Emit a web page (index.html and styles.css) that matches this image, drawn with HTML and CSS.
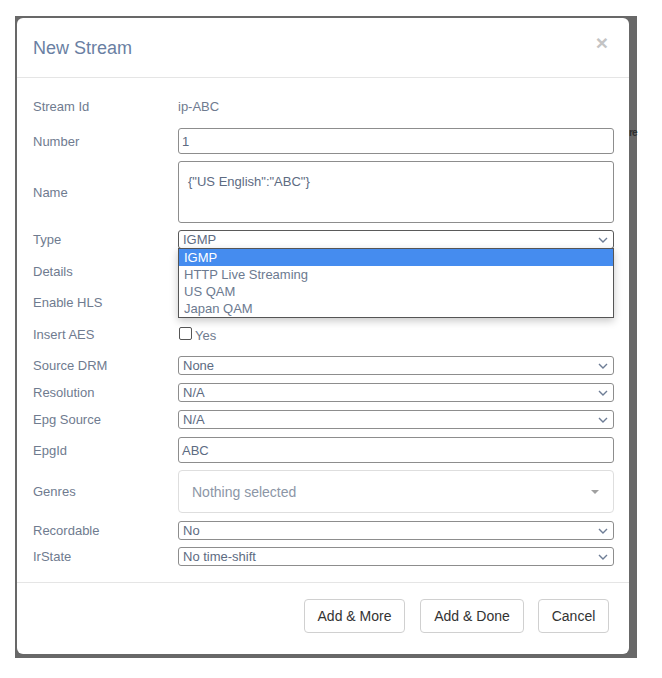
FILE: index.html
```html
<!DOCTYPE html>
<html>
<head>
<meta charset="utf-8">
<link rel="stylesheet" href="styles.css">
</head>
<body>
<div class="backdrop">
  <span class="behind-text">re</span>
  <div class="modal">
    <div class="modal-header">
      <h4 class="modal-title">New Stream</h4>
      <span class="close">&times;</span>
    </div>
    <div class="modal-body">
      <div class="row r-static">
        <div class="label">Stream Id</div>
        <div class="value">ip-ABC</div>
      </div>
      <div class="row r-input gap12">
        <div class="label">Number</div>
        <div class="input">1</div>
      </div>
      <div class="row r-textarea gap7">
        <div class="label">Name</div>
        <div class="textarea">{"US English":"ABC"}</div>
      </div>
      <div class="row r-select gap7 has-menu">
        <div class="label">Type</div>
        <div class="select focused">IGMP<svg class="chev" viewBox="0 0 10 6" width="10" height="6"><path d="M1 1 L5 5 L9 1" fill="none" stroke="currentColor" stroke-width="1.4"/></svg></div>
        <div class="listbox">
          <div class="opt active">IGMP</div>
          <div class="opt">HTTP Live Streaming</div>
          <div class="opt">US QAM</div>
          <div class="opt">Japan QAM</div>
        </div>
      </div>
      <div class="row r-select gap13">
        <div class="label">Details</div>
      </div>
      <div class="row r-select gap12">
        <div class="label">Enable HLS</div>
      </div>
      <div class="row r-select gap13">
        <div class="label">Insert AES</div>
        <div class="check"><span class="box"></span><span class="yes">Yes</span></div>
      </div>
      <div class="row r-select gap12">
        <div class="label">Source DRM</div>
        <div class="select">None<svg class="chev" viewBox="0 0 10 6" width="10" height="6"><path d="M1 1 L5 5 L9 1" fill="none" stroke="currentColor" stroke-width="1.4"/></svg></div>
      </div>
      <div class="row r-select gap8">
        <div class="label">Resolution</div>
        <div class="select">N/A<svg class="chev" viewBox="0 0 10 6" width="10" height="6"><path d="M1 1 L5 5 L9 1" fill="none" stroke="currentColor" stroke-width="1.4"/></svg></div>
      </div>
      <div class="row r-select gap8">
        <div class="label">Epg Source</div>
        <div class="select">N/A<svg class="chev" viewBox="0 0 10 6" width="10" height="6"><path d="M1 1 L5 5 L9 1" fill="none" stroke="currentColor" stroke-width="1.4"/></svg></div>
      </div>
      <div class="row r-input gap8">
        <div class="label">EpgId</div>
        <div class="input">ABC</div>
      </div>
      <div class="row r-genres gap7">
        <div class="label">Genres</div>
        <div class="bs-select">Nothing selected<span class="caret"></span></div>
      </div>
      <div class="row r-select gap8">
        <div class="label">Recordable</div>
        <div class="select">No<svg class="chev" viewBox="0 0 10 6" width="10" height="6"><path d="M1 1 L5 5 L9 1" fill="none" stroke="currentColor" stroke-width="1.4"/></svg></div>
      </div>
      <div class="row r-select gap7">
        <div class="label">IrState</div>
        <div class="select">No time-shift<svg class="chev" viewBox="0 0 10 6" width="10" height="6"><path d="M1 1 L5 5 L9 1" fill="none" stroke="currentColor" stroke-width="1.4"/></svg></div>
      </div>
    </div>
    <div class="modal-footer">
      <button class="btn btn-more">Add &amp; More</button>
      <button class="btn btn-done">Add &amp; Done</button>
      <button class="btn btn-cancel">Cancel</button>
    </div>
  </div>
</div>
</body>
</html>
```

FILE: styles.css
```css
* { box-sizing: border-box; }
html, body { margin: 0; padding: 0; background: #fff; }
body {
  font-family: "Liberation Sans", Arial, sans-serif;
  font-size: 13px;
  color: #6f7b8f;
}
.backdrop {
  position: relative;
  margin: 16px 0 0 15px;
  width: 622px;
  height: 642px;
  background: #686868;
  padding: 2px 8px 4px 2px;
}
.behind-text {
  position: absolute;
  left: 614px;
  top: 111px;
  font-size: 10px;
  letter-spacing: -1px;
  font-weight: bold;
  color: #2e2e2e;
  white-space: nowrap;
}
.modal {
  position: relative;
  width: 612px;
  height: 636px;
  background: #fff;
  border-radius: 6px;
  display: flex;
  flex-direction: column;
}
.modal-header {
  height: 60px;
  border-bottom: 1px solid #e5e5e5;
  display: flex;
  align-items: center;
  justify-content: space-between;
  padding: 0 16px;
}
.modal-title {
  margin: 0;
  font-size: 18px;
  font-weight: normal;
  line-height: 26px;
  color: #6a7fa3;
}
.close {
  font-size: 21px;
  font-weight: bold;
  color: #c4c4c4;
  line-height: 1;
  position: relative;
  top: -5px;
  right: 5px;
}
.modal-body {
  padding: 18px 15px 16px 16px;
  flex: 1;
}
.row {
  display: flex;
  align-items: center;
  position: relative;
}
.label {
  width: 145px;
  flex: none;
}
.r-static { height: 20px; }
.r-input { height: 26px; }
.r-textarea { height: 62px; }
.r-select { height: 19px; }
.r-genres { height: 43px; }
.gap7 { margin-top: 7px; }
.gap8 { margin-top: 8px; }
.gap12 { margin-top: 12px; }
.gap13 { margin-top: 13px; }

.input, .textarea, .select {
  width: 436px;
  height: 100%;
  border: 1px solid #8d8d8d;
  border-radius: 3px;
  background: #fff;
  color: #5d6b82;
}
.input {
  padding: 0 3px;
  display: flex;
  align-items: center;
}
.textarea {
  padding: 10px 9px;
  line-height: 20px;
  align-self: stretch;
}
.select {
  display: flex;
  align-items: center;
  justify-content: space-between;
  padding: 0 4px 0 4px;
}
.select.focused { border-color: #5a5a5a; }
.chev {
  color: #6e7d96;
  margin-right: 1px;
}
.listbox {
  position: absolute;
  left: 145px;
  top: 18px;
  width: 436px;
  border: 1px solid #555;
  background: #fff;
  box-shadow: 0 3px 8px rgba(0,0,0,0.22);
  z-index: 5;
}
.opt {
  height: 17px;
  line-height: 17px;
  padding-left: 5px;
  color: #6c7a90;
}
.opt.active {
  background: #458cef;
  color: #fff;
}
.check {
  display: flex;
  align-items: center;
}
.box {
  width: 13px;
  height: 13px;
  border: 1px solid #555;
  border-radius: 2px;
  margin-left: 1px;
  position: relative;
  top: -1px;
}
.yes {
  margin-left: 3px;
  position: relative;
  top: 1px;
  color: #6f7b8f;
}
.bs-select {
  width: 436px;
  height: 100%;
  border: 1px solid #dedede;
  border-radius: 4px;
  display: flex;
  align-items: center;
  justify-content: space-between;
  padding: 0 14px 0 13px;
  font-size: 14px;
  color: #8c96a6;
}
.caret {
  width: 0;
  height: 0;
  border-left: 4px solid transparent;
  border-right: 4px solid transparent;
  border-top: 4px solid #a0a0a0;
}
.modal-footer {
  border-top: 1px solid #e5e5e5;
  height: 72px;
  display: flex;
  justify-content: flex-end;
  align-items: flex-start;
  padding: 16px 20px 0 0;
  gap: 14px;
}
.btn {
  font-family: "Liberation Sans", Arial, sans-serif;
  font-size: 14px;
  color: #333;
  background: #fff;
  border: 1px solid #d0d0d0;
  border-radius: 4px;
  height: 34px;
  padding: 0 12px;
}
.btn-more { width: 101px; }
.btn-done { width: 104px; margin-left: 1px; }
.btn-cancel { width: 71px; }
```
